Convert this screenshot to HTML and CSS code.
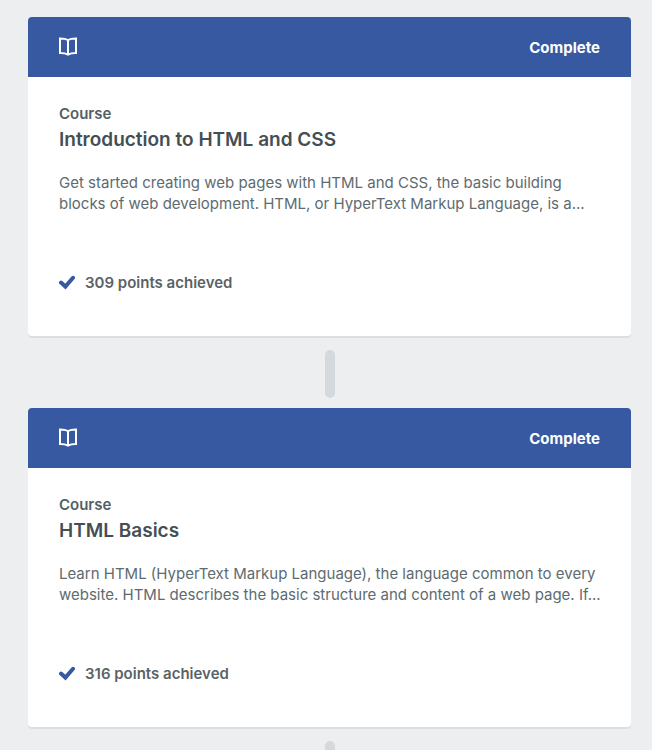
FILE: index.html
```html
<!DOCTYPE html>
<html lang="en">
<head>
    <meta charset="UTF-8">
    <meta name="viewport" content="width=device-width, initial-scale=1.0">
    <title>Track</title>
    <link rel="stylesheet" href="styles.css">
</head>
<body>
    <main class="track">
        <article class="card">
            <header class="card_header">
                <svg class="icon_book" width="18" height="20" viewBox="0 0 18 20" fill="none" stroke="currentColor" stroke-width="2">
                    <path d="M1 1.4 C4 1.4 7 1.8 9 3 C11 1.8 14 1.4 17 1.4 V16 C14 16 11 16.4 9 17.6 C7 16.4 4 16 1 16 Z M9 3 V18"/>
                </svg>
                <span class="status">Complete</span>
            </header>
            <div class="card_body">
                <p class="type">Course</p>
                <h2 class="title">Introduction to HTML and CSS</h2>
                <p class="description">Get started creating web pages with HTML and CSS, the basic building blocks of web development. HTML, or HyperText Markup Language, is a...</p>
                <p class="points">
                    <svg class="icon_check" width="16" height="16" viewBox="0 0 16 16" fill="none" stroke="currentColor" stroke-width="4" stroke-linecap="round">
                        <path d="M2 7.6 L6.4 11.6 L14 2.8"/>
                    </svg>
                    309 points achieved
                </p>
            </div>
        </article>

        <div class="connector"></div>

        <article class="card">
            <header class="card_header">
                <svg class="icon_book" width="18" height="20" viewBox="0 0 18 20" fill="none" stroke="currentColor" stroke-width="2">
                    <path d="M1 1.4 C4 1.4 7 1.8 9 3 C11 1.8 14 1.4 17 1.4 V16 C14 16 11 16.4 9 17.6 C7 16.4 4 16 1 16 Z M9 3 V18"/>
                </svg>
                <span class="status">Complete</span>
            </header>
            <div class="card_body">
                <p class="type">Course</p>
                <h2 class="title">HTML Basics</h2>
                <p class="description">Learn HTML (HyperText Markup Language), the language common to every website. HTML describes the basic structure and content of a web page. If...</p>
                <p class="points">
                    <svg class="icon_check" width="16" height="16" viewBox="0 0 16 16" fill="none" stroke="currentColor" stroke-width="4" stroke-linecap="round">
                        <path d="M2 7.6 L6.4 11.6 L14 2.8"/>
                    </svg>
                    316 points achieved
                </p>
            </div>
        </article>

        <div class="connector"></div>
    </main>
</body>
</html>
```

FILE: styles.css
```css
*{
    margin: 0;
    padding: 0;
    box-sizing: border-box;
}

html{
    height: 100%;
    overflow: hidden;
}

body{
    height: 100%;
    overflow-y: auto;
    scrollbar-width: none;
    background-color: #edeeef;
    font-family: Inter, "Open Sans", sans-serif;
    font-size: 15px;
    line-height: 21px;
    color: #5d6b70;
}

.track{
    padding: 17px 21px 0 28px;
}

.card{
    background-color: #fff;
    border-radius: 4px;
    box-shadow: 0 2px 0 #dcdee0;
    overflow: hidden;
}

.card_header{
    height: 60px;
    padding: 0 31px;
    display: flex;
    align-items: center;
    justify-content: space-between;
    background-color: #3659a2;
    color: #fff;
}

.status{
    font-weight: 700;
}

.card_body{
    padding: 26px 24px 43px 31px;
}

.type{
    font-weight: 600;
    color: #545f64;
}

.title{
    margin-top: 2px;
    font-size: 19px;
    line-height: 28px;
    font-weight: 600;
    color: #444f54;
}

.description{
    min-height: 84px;
    margin-top: 18px;
}

.points{
    margin-top: 16px;
    display: flex;
    align-items: center;
    gap: 10px;
    font-weight: 600;
    color: #5a6265;
}

.icon_check{
    color: #3659a2;
}

.connector{
    width: 10px;
    height: 48px;
    margin: 14px auto 10px;
    border-radius: 5px;
    background-color: #d3d9dd;
}
```
